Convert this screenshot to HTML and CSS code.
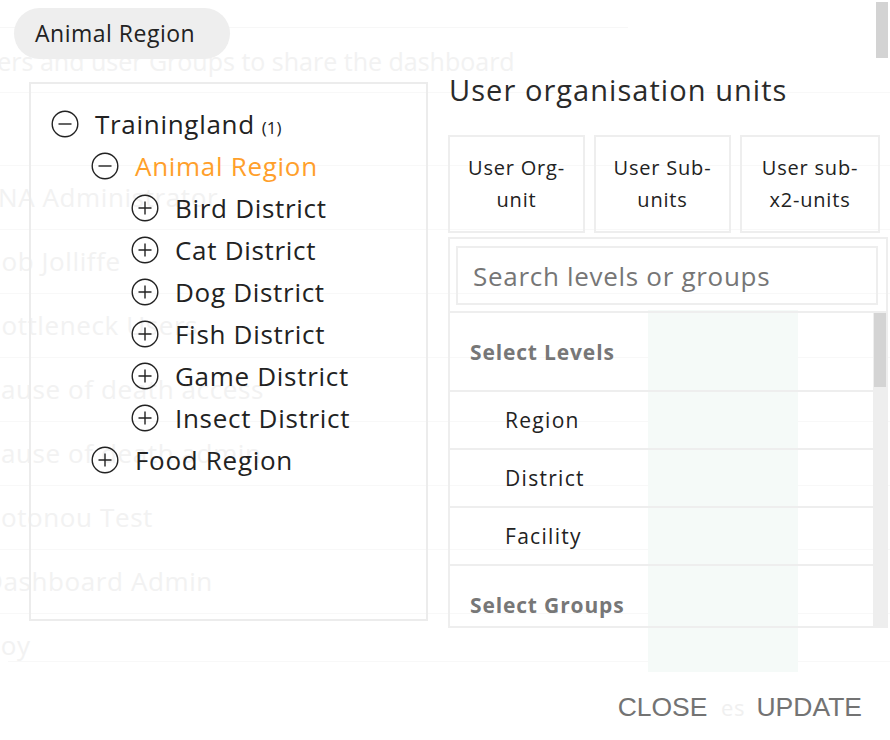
FILE: index.html
```html
<!DOCTYPE html>
<html lang="en">
<head>
<meta charset="utf-8">
<title>User organisation units</title>
<link rel="stylesheet" href="styles.css">
</head>
<body>
<div class="page">
  <div class="ghost" aria-hidden="true">
    <div class="ghost-bar"></div>
    <div class="ghost-title">users and user Groups to share the dashboard</div>
    <div class="ghost-spacer"></div>
    <ul class="ghost-list">
      <li class="ghost-row flush">NA Administrator</li>
      <li class="ghost-row">Bob Jolliffe</li>
      <li class="ghost-row">Bottleneck Users</li>
      <li class="ghost-row">Cause of death access</li>
      <li class="ghost-row">Cause of death admin</li>
      <li class="ghost-row">Cotonou Test</li>
      <li class="ghost-row">Dashboard Admin</li>
      <li class="ghost-row last">Roy</li>
    </ul>
    <div class="ghost-col"></div>
    <div class="ghost-es">es</div>
    <div class="ghost-scroll"></div>
  </div>

  <div class="modal">
    <div class="chip">Animal Region</div>
    <div class="body">
      <div class="tree">
        <div class="node">
          <svg class="ico" viewBox="0 0 28 28"><circle cx="14" cy="14" r="12.8"/><path d="M7.5 14h13"/></svg>
          <span class="label">Trainingland<span class="count">(1)</span></span>
        </div>
        <div class="node lvl1">
          <svg class="ico" viewBox="0 0 28 28"><circle cx="14" cy="14" r="12.8"/><path d="M7.5 14h13"/></svg>
          <span class="label active">Animal Region</span>
        </div>
        <div class="node lvl2">
          <svg class="ico" viewBox="0 0 28 28"><circle cx="14" cy="14" r="12.8"/><path d="M7.5 14h13M14 7.5v13"/></svg>
          <span class="label">Bird District</span>
        </div>
        <div class="node lvl2">
          <svg class="ico" viewBox="0 0 28 28"><circle cx="14" cy="14" r="12.8"/><path d="M7.5 14h13M14 7.5v13"/></svg>
          <span class="label">Cat District</span>
        </div>
        <div class="node lvl2">
          <svg class="ico" viewBox="0 0 28 28"><circle cx="14" cy="14" r="12.8"/><path d="M7.5 14h13M14 7.5v13"/></svg>
          <span class="label">Dog District</span>
        </div>
        <div class="node lvl2">
          <svg class="ico" viewBox="0 0 28 28"><circle cx="14" cy="14" r="12.8"/><path d="M7.5 14h13M14 7.5v13"/></svg>
          <span class="label">Fish District</span>
        </div>
        <div class="node lvl2">
          <svg class="ico" viewBox="0 0 28 28"><circle cx="14" cy="14" r="12.8"/><path d="M7.5 14h13M14 7.5v13"/></svg>
          <span class="label">Game District</span>
        </div>
        <div class="node lvl2">
          <svg class="ico" viewBox="0 0 28 28"><circle cx="14" cy="14" r="12.8"/><path d="M7.5 14h13M14 7.5v13"/></svg>
          <span class="label">Insect District</span>
        </div>
        <div class="node lvl1">
          <svg class="ico" viewBox="0 0 28 28"><circle cx="14" cy="14" r="12.8"/><path d="M7.5 14h13M14 7.5v13"/></svg>
          <span class="label">Food Region</span>
        </div>
      </div>

      <div class="units">
        <h2 class="units-title">User organisation units</h2>
        <div class="unit-btns">
          <button class="unit-btn">User Org-<br>unit</button>
          <button class="unit-btn">User Sub-<br>units</button>
          <button class="unit-btn">User sub-<br>x2-units</button>
        </div>
        <div class="picker">
          <input class="search" type="text" placeholder="Search levels or groups">
          <div class="list">
            <div class="rows">
              <div class="row-head">Select Levels</div>
              <div class="level">Region</div>
              <div class="level">District</div>
              <div class="level">Facility</div>
              <div class="row-head">Select Groups</div>
            </div>
            <div class="scroll"><div class="thumb"></div></div>
          </div>
        </div>
      </div>
    </div>
    <div class="actions">
      <button class="action">CLOSE</button>
      <button class="action">UPDATE</button>
    </div>
  </div>
</div>
</body>
</html>
```

FILE: styles.css
```css
* { box-sizing: border-box; }
html, body { margin: 0; padding: 0; }
body {
  width: 890px;
  height: 740px;
  overflow: hidden;
  background: #fff;
  font-family: "Open Sans", "Noto Sans", sans-serif;
  color: #222;
}
.page { position: relative; width: 890px; height: 740px; overflow: hidden; }

/* faded page behind the dialog */
.ghost { color: #f2f2f2; font-size: 26px; letter-spacing: 0.6px; }
.ghost-bar { height: 28px; width: 628px; border-bottom: 1px solid #f7f7f7; }
.ghost-title {
  height: 65px; line-height: 66px; white-space: nowrap; text-indent: -30px;
  font-size: 25px; letter-spacing: 0;
  border-bottom: 1px solid #f8f8f8;
}
.ghost-spacer { height: 73px; border-bottom: 1px solid #f8f8f8; }
.ghost-list { list-style: none; margin: 0; padding: 0; }
.ghost-row {
  height: 64px; line-height: 63px; white-space: nowrap; text-indent: -16px;
  border-bottom: 1px solid #f8f8f8;
}
.ghost-row.flush { text-indent: -2px; }
.ghost-row.last { height: 48px; line-height: 62px; margin-left: 8px; text-indent: -24px; }
.ghost-col {
  position: absolute; left: 648px; top: 310px; width: 150px; height: 362px;
  background: #f5faf8;
}
.ghost-es { position: absolute; left: 721px; top: 689px; font-size: 22px; line-height: 36px; color: #f0f0f0; }
.ghost-scroll {
  position: absolute; right: 2px; top: 2px; width: 12px; height: 56px; background: #d3d3d3;
}

/* dialog */
.modal { position: absolute; inset: 0; display: flex; flex-direction: column; }
.chip {
  align-self: flex-start;
  margin: 8px 0 0 14px;
  width: 216px; height: 51px;
  border-radius: 26px;
  background: #eeeeee;
  padding-left: 21px;
  font-size: 23px; line-height: 51px; letter-spacing: 0.5px;
  color: #222;
}
.body { display: flex; align-items: flex-start; margin-top: 15px; }

.tree {
  margin: 8px 0 0 29px;
  width: 399px; height: 539px;
  border: 2px solid #ececec;
  padding: 19px 0 0 20px;
}
.node { display: flex; align-items: center; height: 42px; gap: 16px; }
.lvl1 { padding-left: 40px; }
.lvl2 { padding-left: 80px; }
.ico { width: 28px; height: 28px; flex: none; fill: none; stroke: #222; stroke-width: 1.4; }
.label { font-size: 26px; letter-spacing: 0.7px; color: #222; white-space: nowrap; }
.label.active { color: #ff9f2b; }
.count { font-size: 17px; margin-left: 7px; letter-spacing: 0; }

.units { margin-left: 20px; width: 440px; }
.units-title {
  margin: 0 0 29px 1px;
  font-size: 29px; font-weight: 400; line-height: 32px; letter-spacing: 1.05px;
  color: #2a2a2a;
}
.unit-btns { display: grid; grid-template-columns: 137px 137px 140px; column-gap: 9px; }
.unit-btn {
  height: 98px;
  border: 2px solid #eeeeee;
  background: transparent;
  padding: 0;
  display: flex; align-items: center; justify-content: center; text-align: center;
  font: 20px/32px "Open Sans", sans-serif; letter-spacing: 0.8px;
  color: #222;
}
.picker {
  margin-top: 4px;
  height: 391px;
  border: 2px solid #eeeeee;
  display: flex; flex-direction: column;
}
.search {
  margin: 7px 8px 0 6px;
  height: 59px;
  border: 2px solid #eeeeee;
  padding: 0 0 0 15px;
  font: 26px "Open Sans", sans-serif; letter-spacing: 0.7px;
  color: #222; background: transparent; outline: none;
}
.search::placeholder { color: #767676; }
.list {
  flex: 1; min-height: 0;
  margin-top: 6px;
  border-top: 2px solid #eeeeee;
  display: flex; overflow: hidden;
}
.rows { flex: 1; display: flex; flex-direction: column; }
.row-head {
  flex: none; height: 79px;
  border-bottom: 2px solid #eeeeee;
  display: flex; align-items: center; padding-left: 20px;
  font-weight: 700; font-size: 21px; letter-spacing: 0.85px; color: #777;
}
.level {
  flex: none; height: 58px;
  border-bottom: 2px solid #eeeeee;
  display: flex; align-items: center; padding-left: 55px;
  font-size: 21px; letter-spacing: 1.3px; color: #222;
}
.scroll { flex: none; width: 13px; background: #eeeeee; }
.thumb { margin-left: 1px; width: 12px; height: 74px; background: #d4d4d4; }

.actions {
  margin-top: auto; margin-bottom: 15px;
  display: flex; justify-content: flex-end; gap: 49px;
  padding-right: 28px;
}
.action {
  font: 26.5px/36px "Liberation Sans", Arial, sans-serif;
  color: #737373; background: none; border: 0; padding: 0;
}
```
